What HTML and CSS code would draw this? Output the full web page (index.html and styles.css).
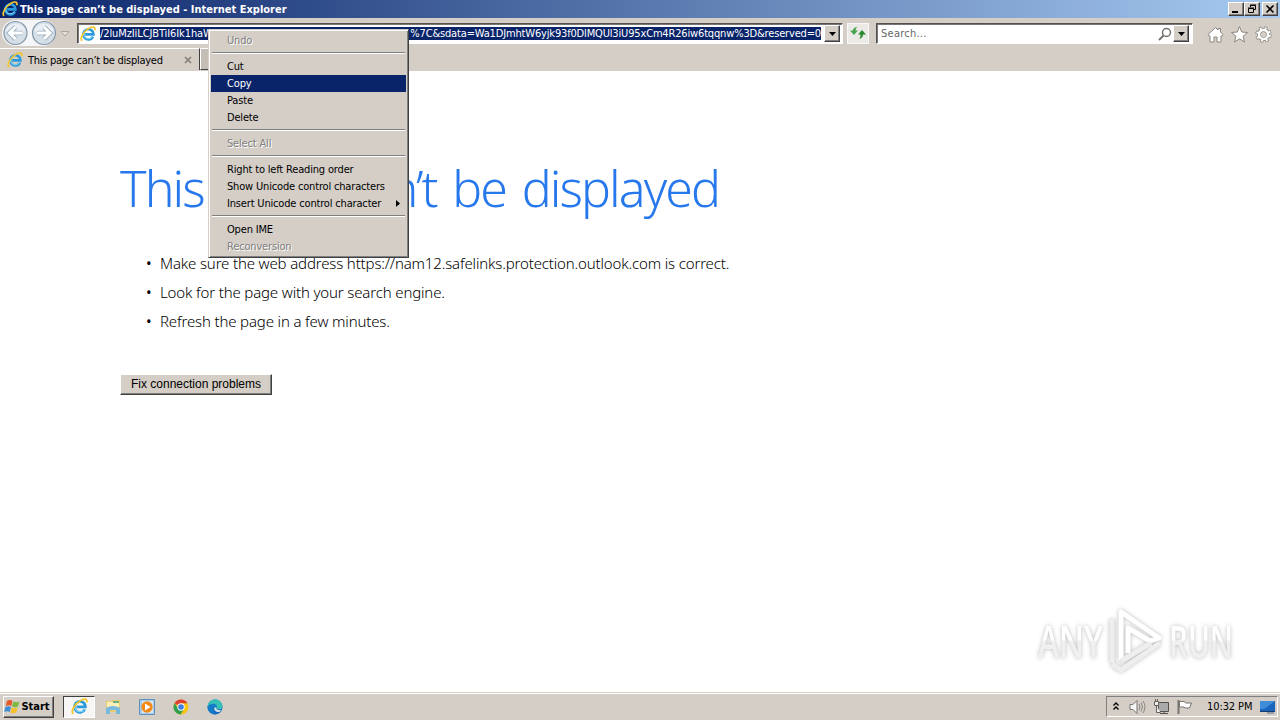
FILE: index.html
```html
<!DOCTYPE html>
<html lang="en">
<head>
    <meta charset="UTF-8">
    <title>This page can't be displayed</title>
    <link rel="stylesheet" href="styles.css">
</head>
<body>
    <!-- Shared icons -->
    <svg class="defs" width="0" height="0">
        <symbol id="ie" viewBox="0 0 16 16">
            <path d="M13 10.600A5.100 5.100 0 1 1 13.500 8.400H5.200" fill="none" stroke="#2b9add" stroke-width="2.600"/>
            <path d="M12.600 10.500A4.900 4.900 0 0 1 3.600 9A5 5 0 0 1 8 4" fill="none" stroke="#8adaf6" stroke-width="1"/>
            <path d="M2.200 14.800C-1 13 4 5 9 2.300C12.600.2 15.800.6 14.700 4.200" fill="none" stroke="#f2c62c" stroke-width="1.700"/>
        </symbol>
        <symbol id="down" viewBox="0 0 7 4"><path d="M0 0h7L3.500 4z" fill="#000"/></symbol>
        <linearGradient id="fade" x1="0" y1="0" x2="0" y2="1">
            <stop offset=".5" stop-color="#fff"/><stop offset=".52" stop-color="#f0f0f0"/>
        </linearGradient>
    </svg>

    <div class="titlebar">
        <svg class="title-icon"><use href="#ie"/></svg>
        <span class="title-text">This page can’t be displayed - Internet Explorer</span>
        <div class="window-buttons">
            <button class="win-btn"><svg width="12" height="10"><path d="M2 8h6" stroke="#000" stroke-width="2"/></svg></button>
            <button class="win-btn"><svg width="12" height="10"><path d="M4.500 3V1.500h5v4H8M4 1h6M2.500 4.500h5v4h-5zM2 4h6" fill="none" stroke="#000"/></svg></button>
            <button class="win-btn close"><svg width="12" height="10"><path d="M2.500 1.500l7 7m0-7l-7 7" stroke="#000" stroke-width="1.600"/></svg></button>
        </div>
    </div>

    <div class="toolbar">
        <svg class="nav" width="58" height="28" viewBox="0 0 58 28">
            <rect x="1" y="1" width="54" height="26" rx="13" fill="#f4f6f8"/>
            <g fill="#d4dfe8" stroke="#8495a6" stroke-width="1.200">
                <circle cx="14.500" cy="14" r="11.500"/><circle cx="43" cy="14" r="11.500"/>
            </g>
            <path d="M4.500 12a10.500 10.500 0 0 1 20 0q-10 4-20 0M33 12a10.500 10.500 0 0 1 20 0q-10 4-20 0" fill="#e9eff4"/>
            <g fill="none" stroke="#9aabba" stroke-width="4.600"><path d="M21.500 14h-12M14.500 8l-6 6 6 6"/><path d="M36 14h12M43 8l6 6-6 6"/></g>
            <g fill="none" stroke="#fff" stroke-width="3"><path d="M21.500 14h-12M14.500 8l-6 6 6 6"/><path d="M36 14h12M43 8l6 6-6 6"/></g>
        </svg>
        <svg class="nav-more" width="10" height="6"><path d="M1 .5h8L5 5z" fill="#e4e0dc" stroke="#aaa6a0"/></svg>

        <div class="address">
            <svg class="address-icon"><use href="#ie"/></svg>
            <div class="url"><span class="url-start">/2luMzIiLCJBTiI6Ik1haWw</span><span class="url-end">%7C&amp;sdata=Wa1DJmhtW6yjk93f0DlMQUl3iU95xCm4R26iw6tqqnw%3D&amp;reserved=0</span></div>
            <button class="drop"><svg width="7" height="4"><use href="#down"/></svg></button>
        </div>

        <button class="refresh">
            <svg width="16" height="14" viewBox="0 0 16 14"><path d="M7.500 1Q5.500 1.500 5.500 4.500H8L4 9 0 4.500h2.800Q3.500 1 7.500 1z" fill="#46a54c"/><path d="M8.500 13Q10.500 12.500 10.500 8.500H8L12 4 16 8.500h-2.800Q12.500 12.500 8.500 13z" fill="#2a8a31"/></svg>
        </button>

        <div class="search">
            <span class="search-text">Search...</span>
            <svg width="14" height="14" viewBox="0 0 14 14"><circle cx="8.500" cy="5.500" r="4" fill="none" stroke="#77736e" stroke-width="1.500"/><path d="M5.500 8.500L1 13" stroke="#77736e" stroke-width="2"/></svg>
            <button class="drop"><svg width="7" height="4"><use href="#down"/></svg></button>
        </div>

        <div class="tools">
            <svg width="17" height="17" viewBox="0 0 17 17"><path d="M1 8.500L8.500 1.500 11 4V2.500h2.500V6L16 8.500 15 10h-1v6h-4v-5H7v5H3v-6H2z" fill="#fff" stroke="#8b8780"/></svg>
            <svg width="17" height="17" viewBox="0 0 17 17"><path d="M8.500 .5l2.200 5.500 5.800.5-4.400 3.700 1.400 5.800-5-3.200-5 3.200 1.400-5.800L.5 6.500 6.300 6z" fill="#fff" stroke="#8b8780"/></svg>
            <svg width="17" height="17" viewBox="0 0 17 17">
                <circle cx="8.500" cy="8.500" r="6.500" fill="none" stroke="#8b8780" stroke-width="3.400" stroke-dasharray="2.900 2.205"/>
                <circle cx="8.500" cy="8.500" r="4.600" fill="none" stroke="#8b8780" stroke-width="4"/>
                <circle cx="8.500" cy="8.500" r="6.200" fill="none" stroke="#fff" stroke-width="2.500" stroke-dasharray="1.800 3.069" stroke-dashoffset="-.5"/>
                <circle cx="8.500" cy="8.500" r="4.500" fill="none" stroke="#fff" stroke-width="2.500"/>
                <circle cx="8.500" cy="8.500" r="2.300" fill="#d4cec7"/>
            </svg>
        </div>
    </div>

    <div class="tabs">
        <div class="tab">
            <svg class="tab-icon"><use href="#ie"/></svg>
            <span class="tab-text">This page can’t be displayed</span>
            <svg class="tab-close" width="8" height="8"><path d="M1 1l6 6m0-6L1 7" stroke="#85817b" stroke-width="1.700"/></svg>
        </div>
        <div class="new-tab"></div>
    </div>

    <main class="content">
        <h1>This page can’t be displayed</h1>
        <ul>
            <li>Make sure the web address https://nam12.safelinks.protection.outlook.com is correct.</li>
            <li>Look for the page with your search engine.</li>
            <li>Refresh the page in a few minutes.</li>
        </ul>
        <button class="fix">Fix connection problems</button>
    </main>

    <div class="menu">
        <div class="item disabled">Undo</div>
        <hr>
        <div class="item">Cut</div>
        <div class="item active">Copy</div>
        <div class="item">Paste</div>
        <div class="item">Delete</div>
        <hr>
        <div class="item disabled">Select All</div>
        <hr>
        <div class="item">Right to left Reading order</div>
        <div class="item">Show Unicode control characters</div>
        <div class="item">Insert Unicode control character<svg width="4" height="7"><path d="M0 0l4 3.500L0 7z"/></svg></div>
        <hr>
        <div class="item">Open IME</div>
        <div class="item disabled">Reconversion</div>
    </div>

    <svg class="watermark" width="250" height="80" viewBox="0 0 250 80">
        <g class="mark-text">
            <text x="8" y="54" textLength="65" lengthAdjust="spacingAndGlyphs">ANY</text>
            <text x="139" y="54" textLength="64" lengthAdjust="spacingAndGlyphs">RUN</text>
        </g>
        <g class="mark-logo">
            <path d="M91 56V8l38 26-9 3-22-13v25" stroke="#fff"/>
            <path d="M82 59V15M82 60l9 6 39-27M91 57l30-18" stroke="#eee"/>
        </g>
    </svg>

    <div class="taskbar">
        <button class="start">
            <svg width="17" height="16" viewBox="0 0 17 16">
                <path d="M3 2q3-2 5.500 0L7.300 7Q5 5.500 1.800 7z" fill="#e8572a"/>
                <path d="M9.300 2.400q3 1.600 6.200 0L14 7.500q-3 1.500-6 0z" fill="#7db943"/>
                <path d="M1.500 8q3-1.700 5.500 0L5.700 13q-2.500-1.600-5.500 0z" fill="#3f8fd6"/>
                <path d="M7.800 8.400q3 1.600 6 0L12.300 13.500q-3 1.600-5.900 0z" fill="#f6c02c"/>
            </svg>
            <span>Start</span>
        </button>
        <div class="apps">
            <div class="app running"><svg width="17" height="17"><use href="#ie"/></svg></div>
            <div class="app"><svg width="16" height="16" viewBox="0 0 16 16"><path d="M1 2h5l1-1h8v12H1z" fill="#e8cc74"/><path d="M2 3h12v5H2z" fill="#fbf0b6"/><path d="M8 2h6v2H8z" fill="#66b38a"/><path d="M1 15V9q7-4 14 0v6h-4v-4H5v4z" fill="#79b8df"/></svg></div>
            <div class="app"><svg width="16" height="16" viewBox="0 0 16 16"><path d="M.5.5h15v15H.5z" fill="#a9cbe8" stroke="#5b92c2"/><path d="M3 2h11v12H3z" fill="#d9e8f4"/><circle cx="8" cy="8" r="5.700" fill="#f38a16"/><path d="M6 4.500L11.500 8 6 11.500z" fill="#fff"/></svg></div>
            <div class="app"><svg width="16" height="16" viewBox="0 0 16 16"><circle cx="8" cy="8" r="7.500" fill="#f9c513"/><path d="M8 8L1.500 4.200A7.500 7.500 0 0 1 14.500 4.200H8z" fill="#df3f32"/><path d="M1.500 4.200A7.500 7.500 0 0 0 7.500 15.500L11 10 5 9z" fill="#2f9e4f"/><circle cx="8" cy="8" r="3.700" fill="#fff"/><circle cx="8" cy="8" r="2.800" fill="#3f7de0"/></svg></div>
            <div class="app"><svg width="16" height="16" viewBox="0 0 16 16"><circle cx="8" cy="8" r="7.500" fill="#1769bd"/><path d="M.5 8A7.500 7.500 0 0 1 15.500 7.500C15.500 11 10 11 9 9.500 11 6 5 3 .5 8z" fill="#36bfb5"/><path d="M.5 8C3 3.500 10 4 10 8c0 1-1 1.500-.5 2 1 1.200 4.500 1 5.500-.5-.5 1.500-1.500 3-2.500 3.500-3 .5-6-1.500-5-4.500-2 2-1 5 1.500 7C4 15.500.5 12 .5 8z" fill="#147bc7"/><path d="M7.500 8.500c-1 3 2 5 5 4.500l2-2.500c-1.500 1-4 .8-5-.5-.5-.5 0-1 0-1.800z" fill="#d4e0e4"/></svg></div>
        </div>
        <div class="tray">
            <svg width="6" height="9"><path d="M.5 3.500L3 1l2.500 2.500M.5 7.500L3 5l2.500 2.500" fill="none" stroke="#000" stroke-width="1.300"/></svg>
            <svg class="sound" width="17" height="16" viewBox="0 0 17 16"><path d="M1 5.500h3l4-4v13l-4-4H1z" fill="#f7f7f7" stroke="#77736e"/><path d="M10 5q2 3 0 6M12 3.500q3 4.500 0 9M14 2q4 6 0 12" fill="none" stroke="#8b8882"/></svg>
            <svg class="network" width="17" height="16" viewBox="0 0 17 16"><path d="M5.500 3.500h10v9h-10zM7 14.500h8M11 13v2" fill="#aaa" stroke="#55524e"/><path d="M1.500 2.500h4v4h-4zM3.500 6.500v7h4M2.500 0v2M4.500 0v2" fill="#eee" stroke="#66625e"/></svg>
            <svg class="flag" width="17" height="16" viewBox="0 0 17 16"><path d="M2.500 1v14" stroke="#77736e" stroke-width="2"/><path d="M3.500 2.500h5l1 1.500h6l-2 5H9L8 8H3.500z" fill="#fff" stroke="#77736e"/></svg>
            <span class="clock">10:32 PM</span>
            <svg class="desktop" width="16" height="16" viewBox="0 0 16 16"><path d="M0 2h15v10H0z" fill="#1765bd"/><path d="M0 2h15L4 10H0z" fill="#3f8cd8"/><path d="M0 12h15v1H0z" fill="#163a70"/><path d="M7 13h7v2H7z" fill="#989ca4"/></svg>
        </div>
    </div>
</body>
</html>
```
FILE: styles.css
```css
* {
    box-sizing: border-box;
}
body {
    position: relative;
    display: flex;
    flex-direction: column;
    width: 1280px;
    height: 720px;
    margin: 0;
    overflow: hidden;
    background: #fff;
    color: #000;
    font-family: "DejaVu Sans Condensed", "DejaVu Sans", sans-serif;
    font-stretch: condensed;
    font-size: 11px;
    white-space: nowrap;
}
svg {
    display: block;
    flex: none;
}
.defs {
    position: absolute;
}
button {
    display: flex;
    align-items: center;
    justify-content: center;
    flex: none;
    margin: 0;
    padding: 0;
    background: #d4cec7;
    border: 1px solid;
    border-color: #fff #404040 #404040 #fff;
    box-shadow: inset -1px -1px #808080;
    color: #000;
}

/* Title bar */
.titlebar {
    display: flex;
    align-items: center;
    flex: none;
    height: 18px;
    padding: 0 2px;
    background: linear-gradient(90deg, #0a246a, #a6caf0);
    color: #fff;
    font-weight: bold;
}
.title-icon {
    width: 16px;
    height: 16px;
    margin-right: 2px;
}
.window-buttons {
    display: flex;
    margin-left: auto;
}
.win-btn {
    width: 16px;
    height: 14px;
}
.win-btn.close {
    margin-left: 2px;
}

/* Toolbar */
.toolbar {
    display: flex;
    align-items: center;
    flex: none;
    height: 30px;
    background: #d4cec7;
}
.nav {
    margin-left: 1px;
}
.nav-more {
    margin: 2px 7px 0 1px;
}
.address,
.search {
    display: flex;
    align-items: center;
    flex: none;
    height: 21px;
    border: 1px solid;
    border-color: #55524e #fff #fff #55524e;
    box-shadow: inset 1px 1px #777;
    background: #fff;
}
.address {
    width: 766px;
    padding: 1px 0 0 2px;
}
.address-icon {
    width: 16px;
    height: 16px;
    margin-right: 4px;
}
.url {
    display: flex;
    justify-content: space-between;
    width: 721px;
    height: 13px;
    margin-right: 3px;
    background: #0a246a;
    color: #fff;
    line-height: 14px;
}
.url-start {
    letter-spacing: -0.1px;
}
.url-end {
    letter-spacing: -0.16px;
}
.drop {
    width: 16px;
    height: 17px;
}
.refresh {
    width: 22px;
    height: 21px;
    margin: 0 7px 0 4px;
    background: #eceae6;
    border-color: #f8f8f8;
    box-shadow: none;
}
.search {
    width: 317px;
    padding: 1px 3px 0 4px;
}
.search-text {
    flex: 1;
    color: #666;
    letter-spacing: 0.25px;
}
.search .drop {
    margin-left: 1px;
}
.tools {
    display: flex;
    gap: 7px;
    margin: 3px 0 0 14px;
}

/* Tabs */
.tabs {
    display: flex;
    flex: none;
    height: 23px;
    background: #d4cec7;
}
.tab {
    display: flex;
    align-items: center;
    width: 200px;
    height: 22px;
    padding: 1px 7px 0;
    border-top: 1px solid #fff;
    border-right: 1px solid #404040;
}
.tab-icon {
    width: 16px;
    height: 16px;
    margin-right: 5px;
}
.tab-text {
    letter-spacing: -0.27px;
}
.tab-close {
    margin-left: auto;
}
.new-tab {
    width: 30px;
    height: 22px;
    border: 1px solid;
    border-color: #fff #404040 #404040 #fff;
    background: #c4beb7;
}

/* Error page */
.content {
    flex: 1;
    padding: 83px 0 0 120px;
    font-family: "Noto Sans", "Open Sans", sans-serif;
    font-stretch: normal;
}
h1 {
    height: 68px;
    margin: 0;
    color: #2778ec;
    font-size: 50px;
    font-weight: 300;
    line-height: 68px;
    letter-spacing: -1.9px;
    word-spacing: 4.5px;
}
ul {
    margin: 27px 0 0;
    padding: 0 0 0 40px;
    list-style: none;
    font-size: 15px;
    font-weight: 300;
    line-height: 29px;
    letter-spacing: -0.15px;
}
li {
    display: flex;
    height: 29px;
}
li::before {
    content: "•";
    width: 14px;
    margin-left: -14px;
    font-weight: 400;
}
.fix {
    width: 152px;
    height: 21px;
    margin-top: 38px;
    padding-bottom: 2px;
    font: 12px "Liberation Sans", sans-serif;
}

/* Context menu */
.menu {
    position: absolute;
    left: 208px;
    top: 29px;
    width: 201px;
    padding: 2px;
    border: 1px solid;
    border-color: #d4cec7 #404040 #404040 #d4cec7;
    box-shadow: inset 1px 1px #fff, inset -1px -1px #808080;
    background: #d4cec7;
    letter-spacing: -0.17px;
}
.item {
    display: flex;
    align-items: center;
    justify-content: space-between;
    height: 17px;
    padding: 0 6px 0 16px;
}
.item.active {
    background: #0a246a;
    color: #fff;
}
.item.disabled {
    color: #808080;
    text-shadow: 1px 1px #fff;
}
.menu hr {
    height: 2px;
    margin: 3px 1px 4px;
    border: 0;
    border-top: 1px solid #808080;
    border-bottom: 1px solid #fff;
}

/* Watermark */
.watermark {
    position: absolute;
    left: 1030px;
    top: 604px;
    filter: drop-shadow(0 0 2px #bbb);
}
.mark-text {
    fill: url(#fade);
    font: 600 46px "Open Sans", sans-serif;
}
.mark-logo {
    fill: none;
    stroke-width: 5;
    stroke-linejoin: round;
}

/* Taskbar */
.taskbar {
    display: flex;
    align-items: center;
    flex: none;
    height: 28px;
    padding: 0 2px 0 3px;
    border-top: 1px solid #d4cec7;
    box-shadow: inset 0 1px #fff;
    background: #d4cec7;
}
.start {
    width: 51px;
    height: 22px;
    padding-right: 3px;
    font: bold 11px "DejaVu Sans Condensed", "DejaVu Sans", sans-serif;
}
.apps {
    display: flex;
    margin-left: 9px;
}
.app {
    display: flex;
    align-items: center;
    justify-content: center;
    width: 34px;
    height: 22px;
}
.app.running {
    width: 32px;
    margin-right: 1px;
    border: 1px solid;
    border-color: #404040 #fff #fff #404040;
    background: #f7f6f4;
}
.tray {
    display: flex;
    align-items: center;
    width: 172px;
    height: 21px;
    margin-left: auto;
    padding-left: 6px;
    border: 1px solid;
    border-color: #808080 #fff #fff #808080;
}
.sound {
    margin-left: 10px;
}
.network {
    margin-left: 7px;
}
.flag {
    margin-left: 6px;
}
.clock {
    margin: 0 8px 0 14px;
    letter-spacing: -0.1px;
}
```
